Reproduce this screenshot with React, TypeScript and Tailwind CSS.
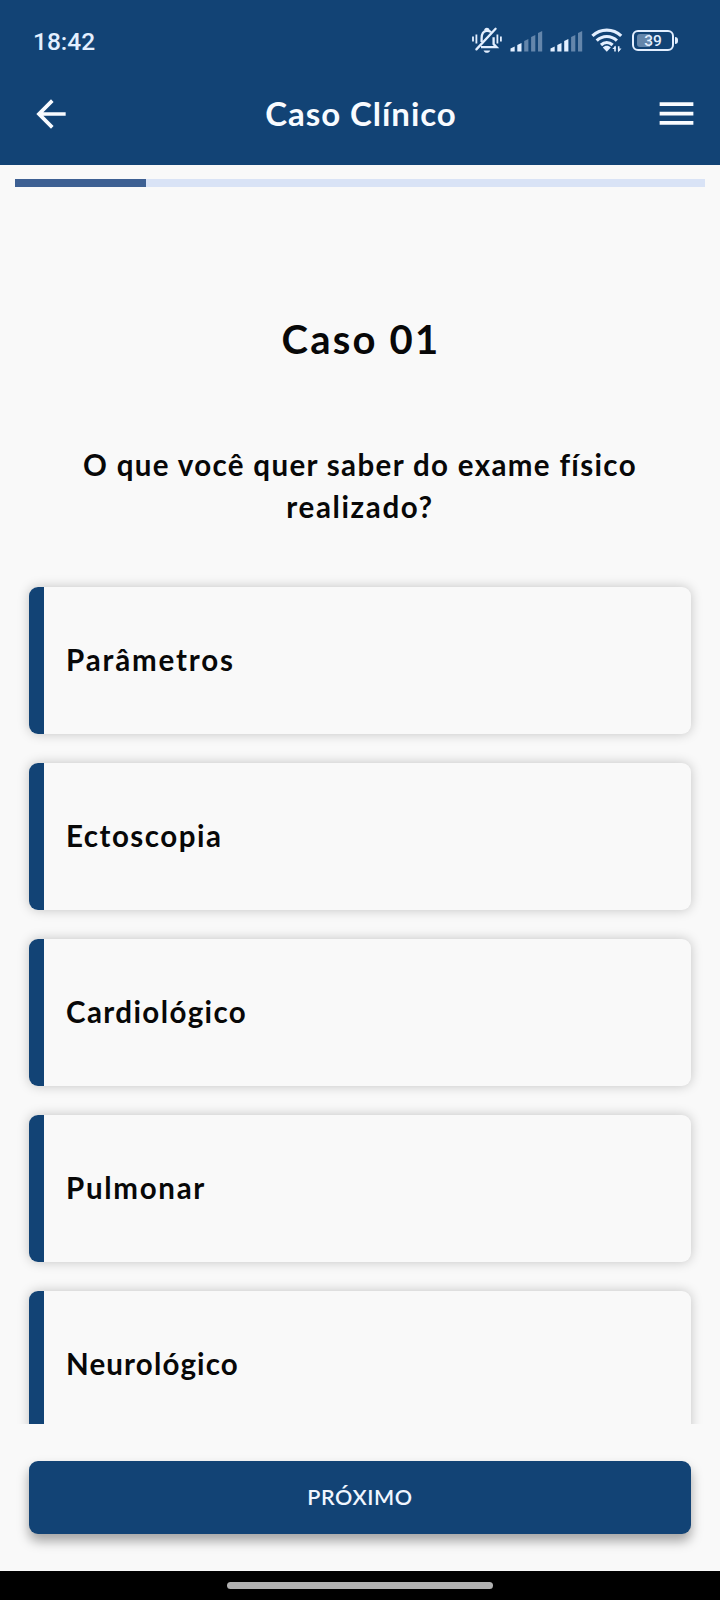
const exams = [
  { label: "Parâmetros", spacing: "tracking-[1.85px]" },
  { label: "Ectoscopia", spacing: "tracking-[1.5px]" },
  { label: "Cardiológico", spacing: "tracking-[1.4px]" },
  { label: "Pulmonar", spacing: "tracking-[1.7px]" },
  { label: "Neurológico", spacing: "tracking-[1.15px]" },
];

function MutedBell() {
  return (
    <svg width="30" height="27" viewBox="0 0 30 27" fill="none" stroke="#e3efff" strokeWidth="2.3">
      <path d="M9.6 15V11.3C9.6 6.8 11.7 4.1 14.6 3.8C16.4 3.6 18 4.2 19 5.2" />
      <path d="M9 20.2H24.6L21.6 17V10.2" />
      <path d="M4.4 22.4L23.6 1.8" strokeLinecap="round" />
      <path d="M11.5 23.4H18.3C17.6 25.1 16.4 25.8 14.9 25.8S12.2 25.1 11.5 23.4Z" fill="#e3efff" stroke="none" />
      <path d="M13.2 3.4C13.2 1.4 16.4 1.4 16.4 3.4" />
      <path d="M1 9.4V14.4M4.4 7.5V16.5M25.4 7.5V16.5M28.9 9.4V14.4" strokeWidth="1.8" />
    </svg>
  );
}

function Signal({ level }: { level: number }) {
  const bars = [
    { x: 0.5, top: 16.5 },
    { x: 7.3, top: 13 },
    { x: 14.2, top: 9 },
    { x: 21.1, top: 5 },
    { x: 28, top: 1 },
  ];
  return (
    <svg width="33" height="22" viewBox="0 0 33 22">
      {bars.map((bar, i) => (
        <path
          key={bar.x}
          d={`M${bar.x} 21.5V${bar.top + 2}L${bar.x + 4.2} ${bar.top}V21.5Z`}
          fill={i < level ? "#e3efff" : "#6486ab"}
        />
      ))}
    </svg>
  );
}

function Wifi() {
  return (
    <svg width="32" height="25" viewBox="0 0 32 25" fill="none" stroke="#e3efff" strokeWidth="3.2">
      <path d="M1.4 7.8C9.6 0.2 22 0.2 30.2 7.8" />
      <path d="M5.7 12.6C11.6 7.1 20 7.1 25.9 12.6" />
      <path d="M10 17C13.5 13.8 18.1 13.8 21.6 17" />
      <path d="M11.8 19.5C14 17.3 17.6 17.3 19.8 19.5L15.8 23.7Z" fill="#e3efff" stroke="none" />
      <path d="M23.9 17.6V23.3M27.6 18.2V24" stroke="#124375" strokeWidth="3.6" />
      <path d="M24 23.4V18.5M27.7 18.3V23" strokeWidth="1.6" />
      <path d="M21.3 21L24.6 17.4V21ZM30.5 20.6L27.1 24.4V20.6Z" fill="#e3efff" stroke="none" />
    </svg>
  );
}

function Battery() {
  return (
    <div className="flex items-center gap-px">
      <div className="relative flex h-[21px] w-[42px] items-center justify-center rounded-md border-2 border-[#e3efff]">
        <div className="absolute top-[2px] bottom-[2px] left-[3px] w-[13px] rounded-l-[3px] bg-[#6486ab]" />
        <span className="relative pt-[3px] font-[Roboto] text-[15.5px] leading-none font-medium text-[#e3efff]">39</span>
      </div>
      <div className="h-[7px] w-[3px] rounded-r-sm bg-[#e3efff]" />
    </div>
  );
}

function StatusBar() {
  return (
    <div className="flex h-[80px] items-center justify-between pr-[42px] pl-[33px]">
      <span className="mt-[4px] font-[Roboto] text-[24.5px] font-medium text-[#e3efff]">18:42</span>
      <div className="flex items-center">
        <MutedBell />
        <div className="mt-[2px] ml-[8px] flex gap-[7px]">
          <Signal level={2} />
          <Signal level={3} />
        </div>
        <div className="mt-px mr-[9px] ml-[8px]">
          <Wifi />
        </div>
        <Battery />
      </div>
    </div>
  );
}

function ExamCard({ label, spacing }: { label: string; spacing: string }) {
  return (
    <div className="flex h-[147px] shrink-0 items-center overflow-hidden rounded-[9px] bg-[#f9f9f9] shadow-[0_0_12px_rgba(0,0,0,0.22)]">
      <div className="h-full w-[15px] bg-[#124375]" />
      <span className={`pl-[22px] text-[29.5px] ${spacing}`}>{label}</span>
    </div>
  );
}

export default function App() {
  return (
    <div className="flex h-[1600px] w-[720px] flex-col overflow-hidden bg-[#f9f9f9] font-[Lato,sans-serif] font-bold text-[#080808]">
      <header className="h-[164.5px] shrink-0 bg-[#124375] text-[#f8fbff]">
        <StatusBar />
        <div className="flex h-[67px] items-center justify-between pr-[21px] pl-[29px]">
          <svg width="44" height="44" viewBox="0 0 24 24" fill="currentColor">
            <path d="M20 11H7.83l5.59-5.59L12 4l-8 8 8 8 1.41-1.41L7.83 13H20v-2z" />
          </svg>
          <h1 className="mr-[5px] text-[33px] tracking-[0.95px]">Caso Clínico</h1>
          <svg width="45" height="45" viewBox="0 0 24 24" fill="currentColor">
            <path d="M3 18h18v-2H3v2zm0-5h18v-2H3v2zm0-7v2h18V6H3z" />
          </svg>
        </div>
      </header>

      <main className="h-[1259.5px] shrink-0 overflow-hidden">
        <div className="mx-[15px] mt-[14.5px] h-[8px] bg-[#d9e3f6]">
          <div className="h-full w-[131px] bg-[#3d6093]" />
        </div>
        <h2 className="mt-[127px] pl-[2px] text-center text-[40px] leading-[50px] tracking-[2.2px]">Caso 01</h2>
        <p className="mt-[80px] text-center text-[29.5px] leading-[42px] tracking-[1.35px]">
          O que você quer saber do exame físico
          <br />
          <span className="tracking-[1.65px]">realizado?</span>
        </p>
        <div className="mt-[59px] flex flex-col gap-[29px] px-[29px]">
          {exams.map((exam) => (
            <ExamCard key={exam.label} {...exam} />
          ))}
        </div>
      </main>

      <div className="h-[146.5px] shrink-0 px-[29px] pt-[36.5px]">
        <button className="h-[73.5px] w-full rounded-[9px] bg-[#124375] text-[21.5px] font-semibold tracking-[0.6px] text-[#f0f6ff] shadow-[0_7px_12px_rgba(0,0,0,0.35)]">
          PRÓXIMO
        </button>
      </div>

      <div className="flex flex-1 justify-center bg-black pt-[11.5px]">
        <div className="h-[7px] w-[266px] rounded-full bg-[#b0b0b0]" />
      </div>
    </div>
  );
}
